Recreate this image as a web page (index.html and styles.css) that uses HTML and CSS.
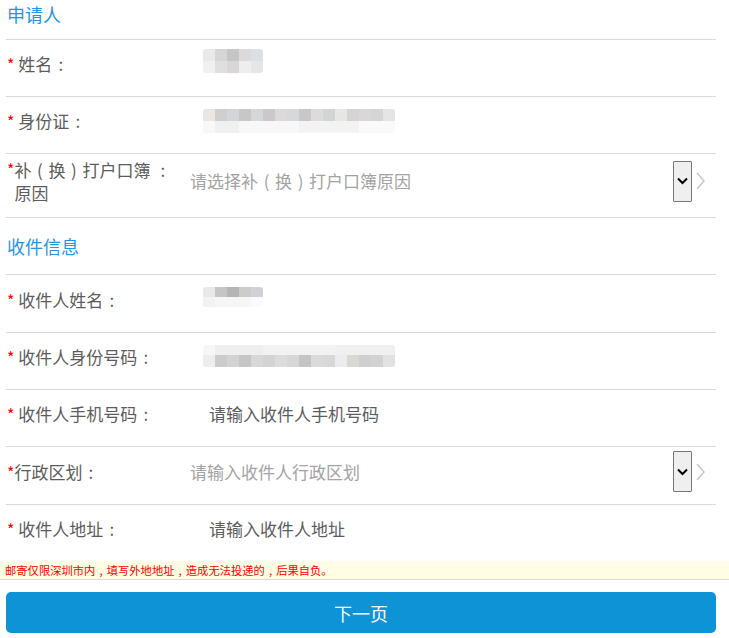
FILE: index.html
```html
<!DOCTYPE html>
<html lang="zh">
<head>
<meta charset="utf-8">
<title>申请</title>
<link rel="stylesheet" href="styles.css">
</head>
<body>
<div class="form">
  <div class="section first">申请人</div>
  <div class="row">
    <div class="label"><span class="req">*</span> 姓名<span class="p">:</span></div>
    <div class="value blur-wrap"><div class="blur b-name1"></div></div>
  </div>
  <div class="row">
    <div class="label"><span class="req">*</span> 身份证<span class="p">:</span></div>
    <div class="value blur-wrap"><div class="blur b-id1"></div></div>
  </div>
  <div class="row tall">
    <div class="label multi"><span class="req">*</span><span class="ltext">补<span class="p">(</span>换<span class="p">)</span>打户口簿 <span class="p">:</span><br>原因</span></div>
    <div class="value select-ph">请选择补<span class="p">(</span>换<span class="p">)</span>打户口簿原因</div>
    <div class="picker">
      <div class="sel-btn"><svg width="11" height="8" viewBox="0 0 11 8"><path d="M1 1.5 L5.5 6 L10 1.5" fill="none" stroke="#000" stroke-width="2"/></svg></div>
      <svg class="arrow" width="9" height="18" viewBox="0 0 9 18"><path d="M1 1 L8 9 L1 17" fill="none" stroke="#c8c8c8" stroke-width="1.5"/></svg>
    </div>
  </div>
  <div class="section">收件信息</div>
  <div class="row first-in">
    <div class="label"><span class="req">*</span> 收件人姓名<span class="p">:</span></div>
    <div class="value blur-wrap"><div class="blur b-name2"></div></div>
  </div>
  <div class="row">
    <div class="label"><span class="req">*</span> 收件人身份号码<span class="p">:</span></div>
    <div class="value blur-wrap"><div class="blur b-id2"></div></div>
  </div>
  <div class="row">
    <div class="label"><span class="req">*</span> 收件人手机号码<span class="p">:</span></div>
    <div class="value input-ph">请输入收件人手机号码</div>
  </div>
  <div class="row">
    <div class="label"><span class="req">*</span>行政区划<span class="p">:</span></div>
    <div class="value select-ph">请输入收件人行政区划</div>
    <div class="picker">
      <div class="sel-btn"><svg width="11" height="8" viewBox="0 0 11 8"><path d="M1 1.5 L5.5 6 L10 1.5" fill="none" stroke="#000" stroke-width="2"/></svg></div>
      <svg class="arrow" width="9" height="18" viewBox="0 0 9 18"><path d="M1 1 L8 9 L1 17" fill="none" stroke="#c8c8c8" stroke-width="1.5"/></svg>
    </div>
  </div>
  <div class="row last">
    <div class="label"><span class="req">*</span> 收件人地址<span class="p">:</span></div>
    <div class="value input-ph">请输入收件人地址</div>
  </div>
</div>
<div class="notice">邮寄仅限深圳市内<span class="p">,</span>填写外地地址<span class="p">,</span>造成无法投递的<span class="p">,</span>后果自负。</div>
<div class="actions">
  <button class="next">下一页</button>
</div>
</body>
</html>
```

FILE: styles.css
```css
* { box-sizing: border-box; }
html, body {
  margin: 0;
  padding: 0;
  background: #fff;
  font-family: "Noto Sans CJK SC", "Noto Sans", sans-serif;
}
.p {
  display: inline-block;
  width: 1em;
  text-align: center;
}
.form {
  padding: 0 13px 0 6px;
}
.section {
  height: 57px;
  line-height: 56px;
  padding-left: 1px;
  font-size: 18px;
  color: #1f95e5;
  border-bottom: 1px solid #d9d9d9;
}
.section.first {
  height: 40px;
  line-height: 28px;
}
.row {
  display: flex;
  align-items: center;
  padding: 4px 0 12px;
  min-height: 57px;
  border-bottom: 1px solid #d9d9d9;
}
.row.tall { padding-top: 3px; min-height: 64px; }
.row.first-in { min-height: 58px; padding-top: 5px; }
.row.last { border-bottom: none; min-height: 56px; }
.label {
  flex: 0 0 170px;
  font-size: 17px;
  line-height: 40px;
  color: #5c5c5c;
  padding-left: 1px;
  white-space: nowrap;
}
.label.multi {
  display: flex;
  line-height: 23.5px;
}
.req {
  color: #ff0000;
  font-size: 16px;
}
.ltext { display: block; }
.value {
  flex: 1 1 auto;
  font-size: 17px;
  line-height: 40px;
}
.blur-wrap { margin-left: 27px; display: flex; align-items: center; }
.select-ph { margin-left: 14px; color: #a3a3a3; }
.input-ph { margin-left: 33px; color: #5c5c5c; }
.blur {
  height: 24px;
  filter: blur(0.6px);
  border-radius: 3px;
}
.b-name1 {
  width: 60px;
  margin-top: -7px;
  background:
    linear-gradient(to right, #f0f0f0 0 12px, #dfdfdf 12px 24px, #d8d6d6 24px 36px, #eeeeee 36px 48px, #e5e6e8 48px) 0 12px / 100% 12px no-repeat,
    linear-gradient(to right, #e9e9e9 0 12px, #d6d6d6 12px 24px, #c6c6c6 24px 36px, #dadada 36px 48px, #dde0e2 48px) 0 0 / 100% 12px no-repeat;
}
.b-id1 {
  width: 192px;
  margin-top: -1px;
  background:
    linear-gradient(to right, #f8f8f8 0 12px, #f0f0f0 12px 36px, #f8f8f8 36px 96px, #f3f3f3 96px 156px, #fafafa 156px) 0 12px / 100% 12px no-repeat,
    linear-gradient(to right, #e9e6e3 0 12px, #cfcfcf 12px 24px, #d3d6d8 24px 36px, #c9c6c6 36px 48px, #d5d8d8 48px 60px, #cbc8cc 60px 72px, #dcdad8 72px 84px, #d5d9dc 84px 96px, #cac8c6 96px 108px, #dcdcdc 108px 120px, #d3d5d5 120px 132px, #e6e6e4 132px 144px, #d5d3d3 144px 156px, #d9d8d8 156px 168px, #d5d5d5 168px 180px, #e5e5e5 180px) 0 0 / 100% 12px no-repeat;
}
.b-name2 {
  width: 60px;
  height: 20px;
  margin-top: -6px;
  background:
    linear-gradient(to right, #f2f2f2 0 12px, #f6f6f6 12px 48px, #fbfbfb 48px) 0 10px / 100% 10px no-repeat,
    linear-gradient(to right, #e8e8e8 0 12px, #c5c5c5 12px 24px, #b5b5b5 24px 36px, #cccccc 36px 48px, #d0d2d5 48px) 0 0 / 100% 10px no-repeat;
}
.b-id2 {
  width: 192px;
  height: 22px;
  margin-top: -2px;
  background:
    linear-gradient(to right, #efedeb 0 12px, #cccccc 12px 24px, #d3d3d3 24px 36px, #c6c6c6 36px 48px, #d8d8d8 48px 60px, #d4d4d4 60px 72px, #dcdcdc 72px 84px, #d7d7d7 84px 96px, #c4c4c4 96px 108px, #dadada 108px 120px, #d8d8d8 120px 132px, #ececec 132px 144px, #d8d8d4 144px 156px, #cfcfcf 156px 168px, #d2d2d2 168px 180px, #e2e2e2 180px) 0 10px / 100% 12px no-repeat,
    linear-gradient(to right, #f7f7f7 0 12px, #efefef 12px 60px, #f2f2f2 60px 132px, #f0f0f0 132px) 0 0 / 100% 10px no-repeat;
}
.picker {
  flex: 0 0 auto;
  display: flex;
  align-items: center;
  gap: 4px;
  margin-right: 11px;
}
.sel-btn {
  width: 19px;
  height: 41px;
  background: #efefef;
  border: 1px solid #767676;
  border-radius: 1px;
  display: flex;
  align-items: center;
  justify-content: center;
}
.arrow { display: block; }
.notice {
  height: 19px;
  background: #fffde4;
  border-bottom: 1px solid #d9d9d9;
  color: #ff0000;
  font-size: 11.3px;
  line-height: 19px;
  padding-left: 5px;
  white-space: nowrap;
}
.actions {
  padding: 12px 13px 0 6px;
}
.next {
  display: block;
  width: 100%;
  height: 41px;
  border: none;
  border-radius: 5px;
  background: #0e93d6;
  color: #fff;
  font-family: "Noto Sans CJK SC", "Noto Sans", sans-serif;
  font-size: 18px;
  padding: 0;
}
```
